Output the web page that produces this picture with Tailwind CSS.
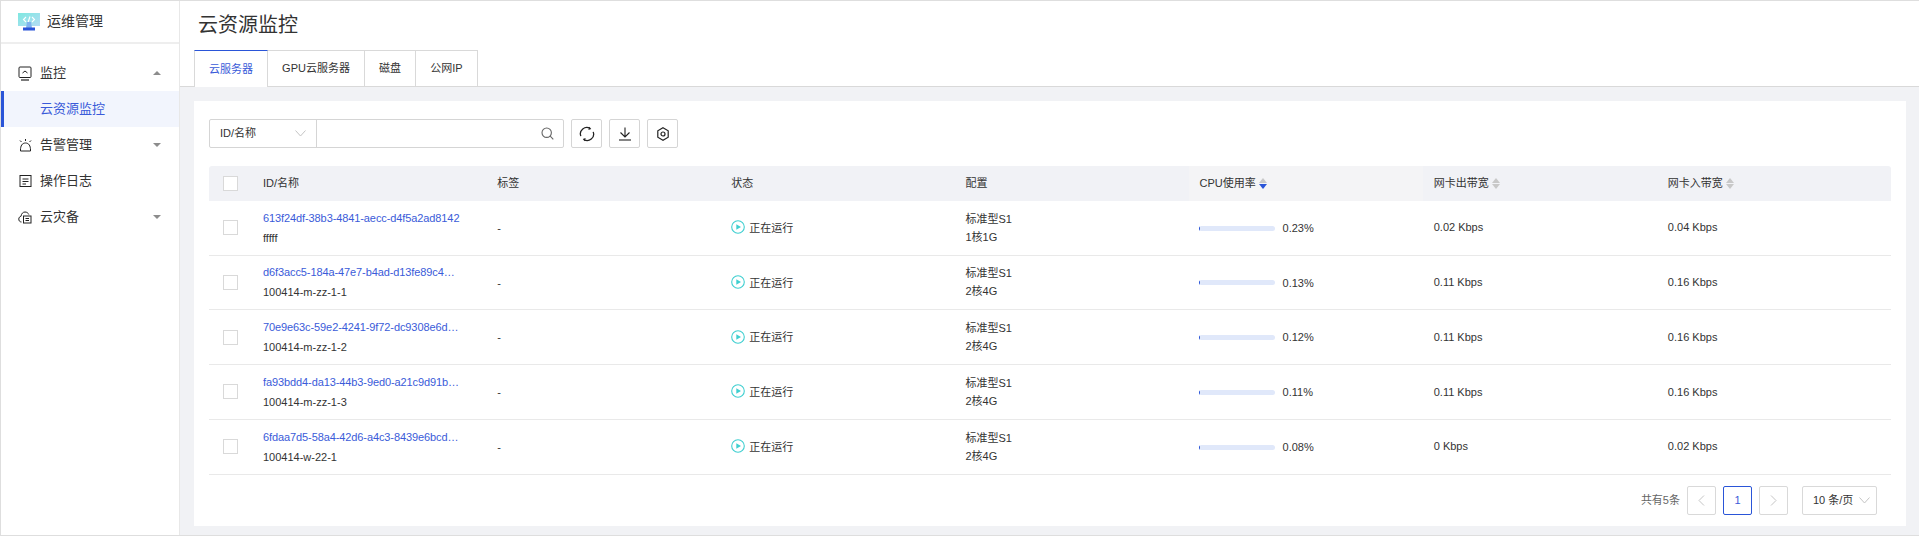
<!DOCTYPE html>
<html lang="zh-CN">
<head>
    <meta charset="UTF-8">
    <title>云资源监控</title>
    <script src="https://cdn.jsdelivr.net/npm/@tailwindcss/browser@4"></script>
</head>
<body class="[font-family:'Liberation_Sans','Noto_Sans_CJK_SC',sans-serif] text-[#333] bg-white overflow-hidden">
<div class="flex h-[536px] border-t border-l border-b border-[#dedede]">

    <!-- 侧边栏 -->
    <aside class="w-[179px] shrink-0 border-r border-[#e8e8e8] bg-white">
        <div class="h-[41px] border-b-2 border-[#eeeeee] flex items-center pl-[17px] box-content">
            <svg class="w-[22px] h-[18px] mr-[7px]" viewBox="0 0 22 18">
                <defs><linearGradient id="logo" x1="0" y1="0" x2="1" y2="1"><stop offset="0" stop-color="#7ee8e0"/><stop offset="1" stop-color="#b5dcf5"/></linearGradient></defs>
                <rect x="0" y="0" width="22" height="13" fill="url(#logo)"/>
                <path d="M8 4 L5.5 6.5 L8 9 M14 4 L16.5 6.5 L14 9 M12 3.5 L10 9.5" stroke="#fff" stroke-width="1.1" fill="none"/>
                <path d="M9 9 H13 L14 15 H8 Z" fill="#7fb2ee"/>
                <rect x="5" y="14.5" width="12" height="3" fill="#2a55d8"/>
            </svg>
            <span class="text-[14px]">运维管理</span>
        </div>
        <nav class="mt-[11px] text-[13px]">
            <div class="h-[36px] flex items-center pl-[17px] pr-[18px]">
                <svg class="w-[14px] h-[15px] mr-[8px]" viewBox="0 0 14 15" fill="none" stroke="#222" stroke-width="1">
                    <rect x="1" y="1" width="12" height="10.5" rx="1"/>
                    <path d="M4.5 7 L7 5 L9.5 7"/>
                    <path d="M3 14 H11" stroke-width="1.2"/>
                </svg>
                <span>监控</span>
                <span class="ml-auto w-0 h-0 border-x-[4px] border-x-transparent border-b-[4px] border-b-[#8c8c8c]"></span>
            </div>
            <div class="h-[36px] flex items-center pl-[36px] bg-[#f2f5fd] border-l-[3px] border-[#2a55d8] text-[#3a5bd9]">云资源监控</div>
            <div class="h-[36px] flex items-center pl-[18px] pr-[18px]">
                <svg class="w-[13px] h-[14px] mr-[8px]" viewBox="0 0 13 14" fill="none" stroke="#222" stroke-width="1">
                    <path d="M1.5 13 H11.5 V12 C11.5 8 10 5 6.5 5 C3 5 1.5 8 1.5 12 Z"/>
                    <path d="M6.5 1 V3 M1 2.5 L2.5 4 M12 2.5 L10.5 4"/>
                </svg>
                <span>告警管理</span>
                <span class="ml-auto w-0 h-0 border-x-[4px] border-x-transparent border-t-[4px] border-t-[#8c8c8c]"></span>
            </div>
            <div class="h-[36px] flex items-center pl-[18px] pr-[18px]">
                <svg class="w-[13px] h-[14px] mr-[8px]" viewBox="0 0 13 14" fill="none" stroke="#222" stroke-width="1">
                    <rect x="1" y="1.5" width="11" height="11"/>
                    <path d="M3.5 5 H9.5 M3.5 7.5 H9.5 M3.5 10 H7"/>
                </svg>
                <span>操作日志</span>
            </div>
            <div class="h-[36px] flex items-center pl-[17px] pr-[18px]">
                <svg class="w-[14px] h-[14px] mr-[8px]" viewBox="0 0 14 14" fill="none" stroke="#222" stroke-width="1">
                    <path d="M3.5 12 C1.5 12 0.8 10.5 0.8 9 C0.8 7.5 1.8 6.5 3 6.3 C3.4 3.5 5 2 7 2 C8.8 2 10.2 3 10.8 4.5"/>
                    <rect x="5.5" y="6" width="7.5" height="7"/>
                    <path d="M7.5 8.5 H11 M7.5 10.5 H11"/>
                </svg>
                <span>云灾备</span>
                <span class="ml-auto w-0 h-0 border-x-[4px] border-x-transparent border-t-[4px] border-t-[#8c8c8c]"></span>
            </div>
        </nav>
    </aside>

    <main class="flex-1 flex flex-col min-w-0">
        <!-- 标题和标签页 -->
        <header class="bg-white">
            <h1 class="h-[49px] pl-[18px] flex items-center text-[20px] pb-[2px]">云资源监控</h1>
            <div class="flex pl-[14px] h-[37px] border-b border-[#d9d9d9] text-[11px]">
                <div class="w-[74px] h-[37px] flex items-center justify-center bg-white border-t border-t-[#2a55d8] border-x border-x-[#d9d9d9] text-[#3a5bd9]">云服务器</div>
                <div class="w-[97px] h-[36px] flex items-center justify-center border-t border-r border-[#d9d9d9]">GPU云服务器</div>
                <div class="w-[51px] h-[36px] flex items-center justify-center border-t border-r border-[#d9d9d9]">磁盘</div>
                <div class="w-[62px] h-[36px] flex items-center justify-center border-t border-r border-[#d9d9d9]">公网IP</div>
            </div>
        </header>

        <section class="flex-1 bg-[#f1f2f5] pt-[14px] pl-[14px] pr-[13px] pb-[9px]">
            <div class="h-full bg-white px-[15px] pt-[18px] text-[11px]">
                <!-- 工具栏 -->
                <div class="flex h-[29px]">
                    <div class="w-[355px] flex border border-[#d5d5d5] rounded-[2px]">
                        <div class="w-[107px] flex items-center pl-[10px] pr-[10px] border-r border-[#d5d5d5]">
                            <span>ID/名称</span>
                            <svg class="ml-auto w-[11px] h-[7px]" viewBox="0 0 11 7" fill="none" stroke="#c4c4c4"><path d="M0.5 0.5 L5.5 6 L10.5 0.5"/></svg>
                        </div>
                        <div class="flex-1 flex items-center justify-end pr-[9px]">
                            <svg class="w-[13px] h-[13px]" viewBox="0 0 13 13" fill="none" stroke="#666" stroke-width="1.1"><circle cx="5.7" cy="5.7" r="4.7"/><path d="M9.2 9.2 L12.3 12.3"/></svg>
                        </div>
                    </div>
                    <button class="ml-[7px] w-[31px] flex items-center justify-center border border-[#d5d5d5] rounded-[2px]">
                        <svg class="w-[16px] h-[16px]" viewBox="0 0 15 15" fill="none" stroke="#222" stroke-width="1.2">
                            <path d="M1.7 9.5 A6 6 0 0 1 10.5 2.3"/>
                            <path d="M13.3 5.5 A6 6 0 0 1 4.5 12.7"/>
                            <path d="M9.5 0.6 L11.5 2.8 L8.8 3.8 Z" fill="#222" stroke="none"/>
                            <path d="M5.5 14.4 L3.5 12.2 L6.2 11.2 Z" fill="#222" stroke="none"/>
                        </svg>
                    </button>
                    <button class="ml-[7px] w-[31px] flex items-center justify-center border border-[#d5d5d5] rounded-[2px]">
                        <svg class="w-[14px] h-[14px]" viewBox="0 0 14 14" fill="none" stroke="#222" stroke-width="1.1">
                            <path d="M7 0.5 V9.5 M2.5 5.5 L7 10 L11.5 5.5"/>
                            <path d="M1 13 H13"/>
                        </svg>
                    </button>
                    <button class="ml-[7px] w-[31px] flex items-center justify-center border border-[#d5d5d5] rounded-[2px]">
                        <svg class="w-[12px] h-[14px]" viewBox="0 0 12 14" fill="none" stroke="#222" stroke-width="1.2">
                            <path d="M6 0.8 L11.2 3.8 V10.2 L6 13.2 L0.8 10.2 V3.8 Z"/>
                            <circle cx="6" cy="7" r="2"/>
                        </svg>
                    </button>
                </div>

                <!-- 表头 -->
                <div class="mt-[18px] grid grid-cols-[43px_repeat(7,1fr)] h-[34.75px] bg-[#f1f2f6] rounded-t-[3px] items-center">
                    <div class="pl-[14px]"><span class="block w-[15px] h-[15px] border border-[#d9d9d9] bg-white"></span></div>
                    <div class="pl-[11px]">ID/名称</div>
                    <div class="pl-[11px]">标签</div>
                    <div class="pl-[11px]">状态</div>
                    <div class="pl-[11px]">配置</div>
                    <div class="pl-[11px] h-full flex items-center bg-[#f4f4f6]">
                        CPU使用率
                        <span class="ml-[3px] flex flex-col gap-[1px]">
                            <span class="w-0 h-0 border-x-[4px] border-x-transparent border-b-[5px] border-b-[#c8c8c8]"></span>
                            <span class="w-0 h-0 border-x-[4px] border-x-transparent border-t-[5px] border-t-[#2a55d8]"></span>
                        </span>
                    </div>
                    <div class="pl-[11px] flex items-center">
                        网卡出带宽
                        <span class="ml-[3px] flex flex-col gap-[1px]">
                            <span class="w-0 h-0 border-x-[4px] border-x-transparent border-b-[5px] border-b-[#c8c8c8]"></span>
                            <span class="w-0 h-0 border-x-[4px] border-x-transparent border-t-[5px] border-t-[#c8c8c8]"></span>
                        </span>
                    </div>
                    <div class="pl-[11px] flex items-center">
                        网卡入带宽
                        <span class="ml-[3px] flex flex-col gap-[1px]">
                            <span class="w-0 h-0 border-x-[4px] border-x-transparent border-b-[5px] border-b-[#c8c8c8]"></span>
                            <span class="w-0 h-0 border-x-[4px] border-x-transparent border-t-[5px] border-t-[#c8c8c8]"></span>
                        </span>
                    </div>
                </div>

                <!-- 表格行 -->
                <div class="grid grid-cols-[43px_repeat(7,1fr)] h-[54.75px] border-b border-[#e9e9e9] items-center">
                    <div class="pl-[14px]"><span class="block w-[15px] h-[15px] border border-[#d9d9d9]"></span></div>
                    <div class="pl-[11px] leading-[20px]"><div class="text-[#3a5bd9] tracking-[-0.1px]">613f24df-38b3-4841-aecc-d4f5a2ad8142</div><div>fffff</div></div>
                    <div class="pl-[11px] pt-[1px]">-</div>
                    <div class="pl-[11px] pt-[1px] flex items-center"><svg class="w-[14px] h-[14px] mr-[4px] -mt-[2px]" viewBox="0 0 14 14"><circle cx="7" cy="7" r="6.3" fill="none" stroke="#3fcfd0" stroke-width="1.1"/><path d="M5.3 4.3 L10 7 L5.3 9.7 Z" fill="#3fcfd0"/></svg>正在运行</div>
                    <div class="pl-[11px] leading-[18px]"><div>标准型S1</div><div>1核1G</div></div>
                    <div class="pl-[10px] pt-[1px] flex items-center"><span class="block w-[76px] h-[5px] rounded-full bg-[#e0e8fa] overflow-hidden"><span class="block w-[1px] h-full bg-[#2a55d8]"></span></span><span class="ml-[8px]">0.23%</span></div>
                    <div class="pl-[11px]">0.02 Kbps</div>
                    <div class="pl-[11px]">0.04 Kbps</div>
                </div>
                <div class="grid grid-cols-[43px_repeat(7,1fr)] h-[54.75px] border-b border-[#e9e9e9] items-center">
                    <div class="pl-[14px]"><span class="block w-[15px] h-[15px] border border-[#d9d9d9]"></span></div>
                    <div class="pl-[11px] leading-[20px]"><div class="text-[#3a5bd9] tracking-[-0.1px]">d6f3acc5-184a-47e7-b4ad-d13fe89c4…</div><div>100414-m-zz-1-1</div></div>
                    <div class="pl-[11px] pt-[1px]">-</div>
                    <div class="pl-[11px] pt-[1px] flex items-center"><svg class="w-[14px] h-[14px] mr-[4px] -mt-[2px]" viewBox="0 0 14 14"><circle cx="7" cy="7" r="6.3" fill="none" stroke="#3fcfd0" stroke-width="1.1"/><path d="M5.3 4.3 L10 7 L5.3 9.7 Z" fill="#3fcfd0"/></svg>正在运行</div>
                    <div class="pl-[11px] leading-[18px]"><div>标准型S1</div><div>2核4G</div></div>
                    <div class="pl-[10px] pt-[1px] flex items-center"><span class="block w-[76px] h-[5px] rounded-full bg-[#e0e8fa] overflow-hidden"><span class="block w-[1px] h-full bg-[#2a55d8]"></span></span><span class="ml-[8px]">0.13%</span></div>
                    <div class="pl-[11px]">0.11 Kbps</div>
                    <div class="pl-[11px]">0.16 Kbps</div>
                </div>
                <div class="grid grid-cols-[43px_repeat(7,1fr)] h-[54.75px] border-b border-[#e9e9e9] items-center">
                    <div class="pl-[14px]"><span class="block w-[15px] h-[15px] border border-[#d9d9d9]"></span></div>
                    <div class="pl-[11px] leading-[20px]"><div class="text-[#3a5bd9] tracking-[-0.1px]">70e9e63c-59e2-4241-9f72-dc9308e6d…</div><div>100414-m-zz-1-2</div></div>
                    <div class="pl-[11px] pt-[1px]">-</div>
                    <div class="pl-[11px] pt-[1px] flex items-center"><svg class="w-[14px] h-[14px] mr-[4px] -mt-[2px]" viewBox="0 0 14 14"><circle cx="7" cy="7" r="6.3" fill="none" stroke="#3fcfd0" stroke-width="1.1"/><path d="M5.3 4.3 L10 7 L5.3 9.7 Z" fill="#3fcfd0"/></svg>正在运行</div>
                    <div class="pl-[11px] leading-[18px]"><div>标准型S1</div><div>2核4G</div></div>
                    <div class="pl-[10px] pt-[1px] flex items-center"><span class="block w-[76px] h-[5px] rounded-full bg-[#e0e8fa] overflow-hidden"><span class="block w-[1px] h-full bg-[#2a55d8]"></span></span><span class="ml-[8px]">0.12%</span></div>
                    <div class="pl-[11px]">0.11 Kbps</div>
                    <div class="pl-[11px]">0.16 Kbps</div>
                </div>
                <div class="grid grid-cols-[43px_repeat(7,1fr)] h-[54.75px] border-b border-[#e9e9e9] items-center">
                    <div class="pl-[14px]"><span class="block w-[15px] h-[15px] border border-[#d9d9d9]"></span></div>
                    <div class="pl-[11px] leading-[20px]"><div class="text-[#3a5bd9] tracking-[-0.1px]">fa93bdd4-da13-44b3-9ed0-a21c9d91b…</div><div>100414-m-zz-1-3</div></div>
                    <div class="pl-[11px] pt-[1px]">-</div>
                    <div class="pl-[11px] pt-[1px] flex items-center"><svg class="w-[14px] h-[14px] mr-[4px] -mt-[2px]" viewBox="0 0 14 14"><circle cx="7" cy="7" r="6.3" fill="none" stroke="#3fcfd0" stroke-width="1.1"/><path d="M5.3 4.3 L10 7 L5.3 9.7 Z" fill="#3fcfd0"/></svg>正在运行</div>
                    <div class="pl-[11px] leading-[18px]"><div>标准型S1</div><div>2核4G</div></div>
                    <div class="pl-[10px] pt-[1px] flex items-center"><span class="block w-[76px] h-[5px] rounded-full bg-[#e0e8fa] overflow-hidden"><span class="block w-[1px] h-full bg-[#2a55d8]"></span></span><span class="ml-[8px]">0.11%</span></div>
                    <div class="pl-[11px]">0.11 Kbps</div>
                    <div class="pl-[11px]">0.16 Kbps</div>
                </div>
                <div class="grid grid-cols-[43px_repeat(7,1fr)] h-[54.75px] border-b border-[#e9e9e9] items-center">
                    <div class="pl-[14px]"><span class="block w-[15px] h-[15px] border border-[#d9d9d9]"></span></div>
                    <div class="pl-[11px] leading-[20px]"><div class="text-[#3a5bd9] tracking-[-0.1px]">6fdaa7d5-58a4-42d6-a4c3-8439e6bcd…</div><div>100414-w-22-1</div></div>
                    <div class="pl-[11px] pt-[1px]">-</div>
                    <div class="pl-[11px] pt-[1px] flex items-center"><svg class="w-[14px] h-[14px] mr-[4px] -mt-[2px]" viewBox="0 0 14 14"><circle cx="7" cy="7" r="6.3" fill="none" stroke="#3fcfd0" stroke-width="1.1"/><path d="M5.3 4.3 L10 7 L5.3 9.7 Z" fill="#3fcfd0"/></svg>正在运行</div>
                    <div class="pl-[11px] leading-[18px]"><div>标准型S1</div><div>2核4G</div></div>
                    <div class="pl-[10px] pt-[1px] flex items-center"><span class="block w-[76px] h-[5px] rounded-full bg-[#e0e8fa] overflow-hidden"><span class="block w-[1px] h-full bg-[#2a55d8]"></span></span><span class="ml-[8px]">0.08%</span></div>
                    <div class="pl-[11px]">0 Kbps</div>
                    <div class="pl-[11px]">0.02 Kbps</div>
                </div>

                <!-- 分页 -->
                <div class="mt-[11px] flex items-center justify-end pr-[14px] h-[29px]">
                    <span class="text-[#666] mr-[7px]">共有5条</span>
                    <span class="w-[29px] h-[29px] flex items-center justify-center border border-[#d9d9d9] rounded-[2px]">
                        <svg class="w-[7px] h-[11px]" viewBox="0 0 7 11" fill="none" stroke="#c4c4c4"><path d="M6 0.5 L1 5.5 L6 10.5"/></svg>
                    </span>
                    <span class="ml-[7px] w-[29px] h-[29px] flex items-center justify-center border border-[#2a55d8] rounded-[2px] text-[#3a5bd9]">1</span>
                    <span class="ml-[7px] w-[29px] h-[29px] flex items-center justify-center border border-[#d9d9d9] rounded-[2px]">
                        <svg class="w-[7px] h-[11px]" viewBox="0 0 7 11" fill="none" stroke="#c4c4c4"><path d="M1 0.5 L6 5.5 L1 10.5"/></svg>
                    </span>
                    <span class="ml-[14px] w-[75px] h-[29px] flex items-center pl-[10px] pr-[6px] border border-[#d9d9d9] rounded-[2px]">
                        10 条/页
                        <svg class="ml-auto w-[11px] h-[7px]" viewBox="0 0 11 7" fill="none" stroke="#c4c4c4"><path d="M0.5 0.5 L5.5 6 L10.5 0.5"/></svg>
                    </span>
                </div>
            </div>
        </section>
    </main>
</div>
</body>
</html>
